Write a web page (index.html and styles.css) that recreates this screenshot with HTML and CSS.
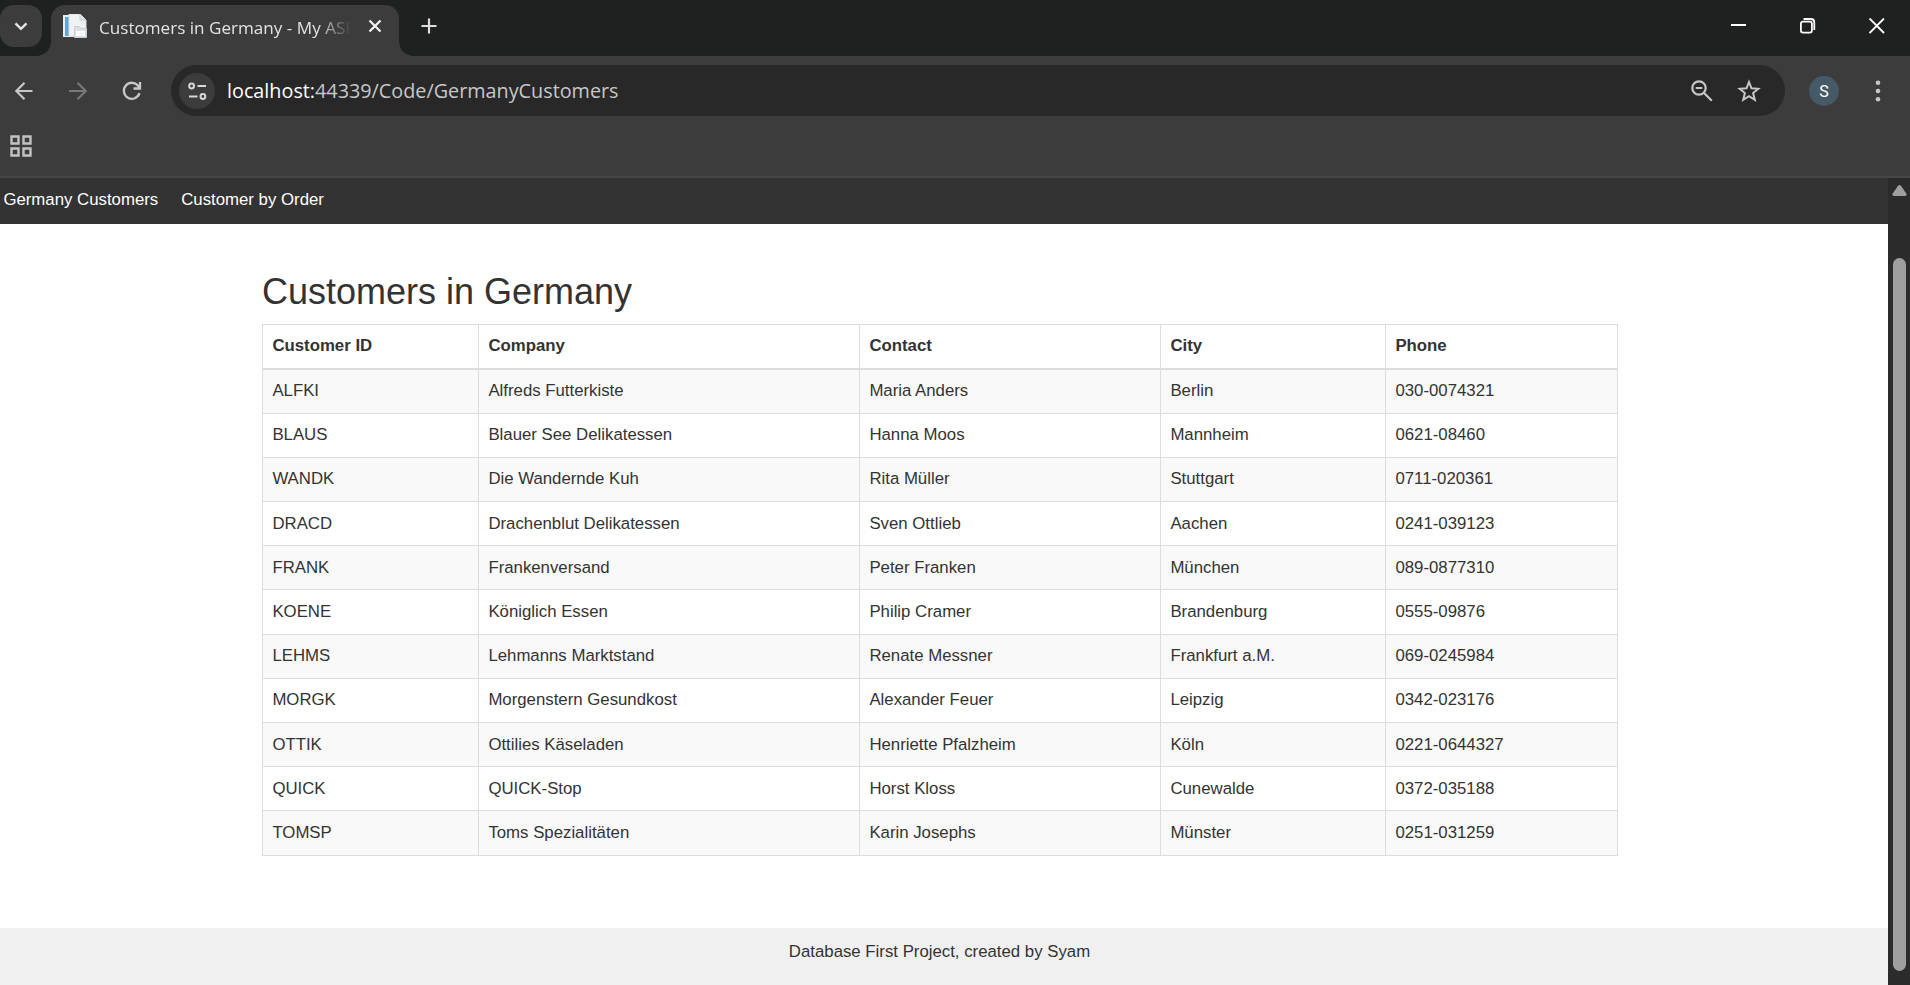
FILE: index.html
```html
<!DOCTYPE html>
<html lang="en">
<head>
<meta charset="utf-8">
<title>Customers in Germany</title>
<link rel="stylesheet" href="styles.css">
</head>
<body>
<header class="tabstrip">
  <div class="tab-search"><svg width="42" height="42" viewBox="0 0 42 42" fill="none" stroke="#e3e3e3" stroke-width="2.4"><path d="M15.5 18.3l5.5 5.5 5.5-5.5"/></svg></div>
  <div class="tab">
    <svg class="favicon" width="24" height="24" viewBox="0 0 24 24"><path d="M0 1h13v22H0z" fill="#e9edf0"/><path d="M2 3h5v19H2z" fill="#5fa5d5"/><path d="M6 0h11l6 6v16H6z" fill="#f1f2f3" stroke="#dcdfe1"/><path d="M17 0v6h6" fill="#dfe3e5" stroke="#c9cdd0"/><path d="M11.500 12.500h5l1.500 2h5.500v9h-12z" fill="#dde1e5" stroke="#c9ced2"/><path d="M13 17h9v5h-9z" fill="#fbfbfb"/></svg>
    <span class="tab-title">Customers in Germany - My ASP</span>
    <svg class="tab-close" width="14" height="14" viewBox="0 0 14 14" stroke="#f1f1f1" stroke-width="2.3"><path d="M1.500 1.500l11 11M12.500 1.500l-11 11"/></svg>
  </div>
  <svg class="new-tab" width="16" height="16" viewBox="0 0 16 16" stroke="#dedede" stroke-width="2.200"><path d="M8 .5v15M.5 8h15"/></svg>
  <div class="window-controls">
    <svg width="16" height="16" viewBox="0 0 16 16" stroke="#fff" stroke-width="2"><path d="M0 7h15"/></svg>
    <svg width="16" height="16" viewBox="0 0 16 16" fill="none" stroke="#fff" stroke-width="1.800"><rect x=".9" y="3.600" width="11" height="11" rx="2"/><path d="M3.500 1h7.500q3.300 0 3.300 3.400v7.600"/></svg>
    <svg width="16" height="16" viewBox="0 0 16 16" stroke="#fff" stroke-width="1.900"><path d="M.5.500l14.500 14.500M15 .500L.5 15"/></svg>
  </div>
</header>
<div class="toolbar">
  <div class="nav-buttons">
    <svg width="20" height="20" viewBox="0 0 20 20" fill="none" stroke="#c7c7c7" stroke-width="2.200"><path d="M18.500 10H2.500M10.500 1.800L2.300 10l8.200 8.200"/></svg>
    <svg width="20" height="20" viewBox="0 0 20 20" fill="none" stroke="#777" stroke-width="2.200"><path d="M1 10h16.500M9.500 1.800l8.200 8.200-8.200 8.200"/></svg>
    <svg width="20" height="20" viewBox="0 0 20 20" fill="none" stroke="#c7c7c7" stroke-width="2.300"><path d="M17.500 12.200A8 8 0 1 1 16.300 5l1.400 1.700M18 1v6.500h-6.500"/></svg>
  </div>
  <div class="omnibox">
    <div class="site-info"><svg width="20" height="20" viewBox="0 0 20 20" fill="none" stroke="#d8d8d8" stroke-width="2"><circle cx="4.600" cy="5" r="2.400"/><path d="M10.500 5H19M2 15.500h8.500"/><circle cx="15.900" cy="15.500" r="2.400"/></svg></div>
    <div class="url"><span class="host">localhost:</span><span class="path">44339/Code/GermanyCustomers</span></div>
    <svg class="zoom-icon" width="22" height="22" viewBox="0 0 22 22" fill="none" stroke="#c7c7c7" stroke-width="2.200"><circle cx="8" cy="8" r="6.700"/><path d="M4.700 8h6.600M12.800 12.800l8 8"/></svg>
    <svg width="24" height="24" viewBox="0 0 24 24" fill="none" stroke="#c7c7c7" stroke-width="2"><path d="M12 3l2.500 6.300 6.800.5-5.200 4.300 1.700 6.700-5.800-3.700-5.800 3.700 1.700-6.700L2.700 9.800l6.800-.5z"/></svg>
  </div>
  <div class="avatar">S</div>
  <svg class="menu" width="6" height="22" viewBox="0 0 6 22" fill="#c7c7c7"><circle cx="3" cy="2.700" r="2.300"/><circle cx="3" cy="11" r="2.300"/><circle cx="3" cy="19.300" r="2.300"/></svg>
</div>
<div class="bookmarks">
  <svg width="22" height="22" viewBox="0 0 22 22" fill="none" stroke="#c2c2c2" stroke-width="2.400"><path d="M1.500 1.500h7v7h-7zM13.500 1.500h7v7h-7zM1.500 13.500h7v7h-7zM13.500 13.500h7v7h-7z"/></svg>
</div>
<div class="viewport">
  <div class="page">
    <nav class="site-nav"><a>Germany Customers</a><a>Customer by Order</a></nav>
    <main class="content">
      <h2>Customers in Germany</h2>
      <table class="customers">
        <colgroup><col class="c-id"><col class="c-company"><col class="c-contact"><col class="c-city"><col class="c-phone"></colgroup>
        <thead><tr><th>Customer ID</th><th>Company</th><th>Contact</th><th>City</th><th>Phone</th></tr></thead>
        <tbody>
          <tr><td>ALFKI</td><td>Alfreds Futterkiste</td><td>Maria Anders</td><td>Berlin</td><td>030-0074321</td></tr>
          <tr><td>BLAUS</td><td>Blauer See Delikatessen</td><td>Hanna Moos</td><td>Mannheim</td><td>0621-08460</td></tr>
          <tr><td>WANDK</td><td>Die Wandernde Kuh</td><td>Rita Müller</td><td>Stuttgart</td><td>0711-020361</td></tr>
          <tr><td>DRACD</td><td>Drachenblut Delikatessen</td><td>Sven Ottlieb</td><td>Aachen</td><td>0241-039123</td></tr>
          <tr><td>FRANK</td><td>Frankenversand</td><td>Peter Franken</td><td>München</td><td>089-0877310</td></tr>
          <tr><td>KOENE</td><td>Königlich Essen</td><td>Philip Cramer</td><td>Brandenburg</td><td>0555-09876</td></tr>
          <tr><td>LEHMS</td><td>Lehmanns Marktstand</td><td>Renate Messner</td><td>Frankfurt a.M.</td><td>069-0245984</td></tr>
          <tr><td>MORGK</td><td>Morgenstern Gesundkost</td><td>Alexander Feuer</td><td>Leipzig</td><td>0342-023176</td></tr>
          <tr><td>OTTIK</td><td>Ottilies Käseladen</td><td>Henriette Pfalzheim</td><td>Köln</td><td>0221-0644327</td></tr>
          <tr><td>QUICK</td><td>QUICK-Stop</td><td>Horst Kloss</td><td>Cunewalde</td><td>0372-035188</td></tr>
          <tr><td>TOMSP</td><td>Toms Spezialitäten</td><td>Karin Josephs</td><td>Münster</td><td>0251-031259</td></tr>
        </tbody>
      </table>
    </main>
    <footer class="footer">Database First Project, created by Syam</footer>
  </div>
  <div class="scrollbar">
    <svg width="15" height="12" viewBox="0 0 15 12" fill="#9f9f9f"><path d="M5.700 1.200q1.800-2.200 3.600 0l5 7.300q1.200 2.500-1.300 2.500H2q-2.500 0-1.300-2.500z"/></svg>
    <div class="thumb"></div>
  </div>
</div>
</body>
</html>
```
FILE: styles.css
```css
* { box-sizing: border-box; }
html, body { height: 100%; }
body {
  margin: 0;
  overflow: hidden;
  display: flex;
  flex-direction: column;
  background: #3c3c3c;
  color: #333;
  font: 16.8px/24px "Liberation Sans", Arial, sans-serif;
}
svg { display: block; flex: none; }

.tabstrip { display: flex; height: 56px; flex: none; background: #1f2120; }
.tab-search {
  width: 42px; height: 42px; margin: 5px 9px 0 0;
  border-radius: 14px; background: #3c3c3c;
}
.tab {
  position: relative;
  display: flex; width: 348px; height: 51px; margin-top: 5px;
  padding-left: 12px;
  border-radius: 14px 14px 0 0; background: #3c3c3c;
}
.tab::before, .tab::after {
  content: ""; position: absolute; bottom: 0; width: 14px; height: 14px;
}
.tab::before { left: -14px; background: radial-gradient(circle at 0 0, transparent 13.5px, #3c3c3c 14px); }
.tab::after { right: -14px; background: radial-gradient(circle at 100% 0, transparent 13.5px, #3c3c3c 14px); }
.favicon { margin-top: 9px; }
.tab-title {
  width: 252px; margin: 10px 0 0 12px;
  white-space: nowrap;
  font: 17.1px/26px "Open Sans", sans-serif; color: #e3e3e3;
  -webkit-mask-image: linear-gradient(to right, #000 218px, transparent 252px);
  mask-image: linear-gradient(to right, #000 218px, transparent 252px);
}
.tab-close { margin: 14px 0 0 17px; }
.new-tab { margin: 18px 0 0 22px; }
.window-controls { display: flex; gap: 53px; margin: 18px 25px 0 auto; }

.toolbar {
  display: flex; align-items: center; flex: none;
  height: 70px; padding: 0 29px 0 14px;
  background: #3c3c3c;
}
.nav-buttons { display: flex; gap: 34px; width: 157px; }
.omnibox {
  display: flex; align-items: center;
  width: 1614px; height: 51px; padding: 0 24px 0 8px; margin-bottom: 1px;
  border-radius: 26px; background: #282828;
}
.site-info {
  display: flex; align-items: center; justify-content: center;
  width: 36px; height: 36px; border-radius: 50%; background: #3c3c3c;
}
.url { flex: 1; margin-left: 12px; font: 19.8px/28px "Open Sans", sans-serif; color: #c7c7c7; }
.host { color: #fff; }
.zoom-icon { margin-right: 24px; }
.avatar {
  width: 30px; height: 30px; margin-left: 24px;
  border-radius: 50%; background: #455a66;
  text-align: center; font: 16px/31px Roboto, sans-serif; color: #fff;
}
.menu { margin-left: auto; margin-right: 0; }
.bookmarks { flex: none; height: 52px; padding: 9px 10px 0; border-bottom: 2px solid #464646; }

.viewport { display: flex; flex: 1; min-height: 0; }
.page { display: flex; flex-direction: column; flex: 1; background: #fff; }
.site-nav {
  display: flex; gap: 23px; flex: none;
  height: 46px; padding: 10px 3.4px 0;
  background: #333; color: #fff;
}
.content { flex: 1; padding: 48px 0 0 262px; }
h2 { margin: 0 0 12px; font-size: 36px; line-height: 40px; font-weight: 400; }
.customers { table-layout: fixed; width: 1356px; border-collapse: collapse; }
.customers th, .customers td {
  height: 44.2px; padding: 0 9.4px; border: 1px solid #ddd; text-align: left; line-height: 24px;
}
.customers th { height: 44.5px; padding-bottom: 1px; border-bottom-width: 2px; }
.customers tbody tr:nth-child(odd) { background: #f9f9f9; }
.c-id { width: 216px; }
.c-company { width: 381px; }
.c-contact { width: 301px; }
.c-city { width: 225px; }
.c-phone { width: 232px; }
.footer { flex: none; height: 57px; padding-top: 12px; padding-right: 9px; background: #f0f0f0; text-align: center; }

.scrollbar {
  display: flex; flex-direction: column; flex: none;
  width: 22px; padding: 7px 4px 14px; background: #2b2b2b;
}
.thumb { flex: 1; width: 13px; margin: 61px 0 0 1px; border-radius: 7px; background: #9f9f9f; }
```
